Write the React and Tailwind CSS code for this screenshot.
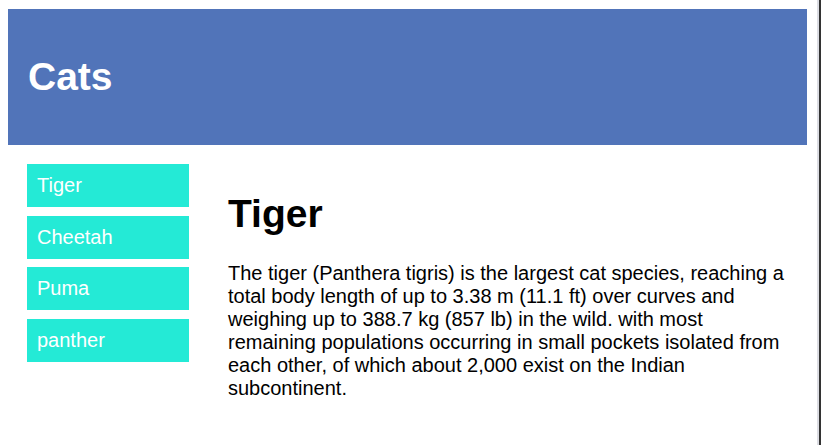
export default function App() {
  const cats = ["Tiger", "Cheetah", "Puma", "panther"];

  return (
    <div className="flex h-[445px] w-[821px] overflow-hidden bg-white font-['Liberation_Sans',Arial,sans-serif] leading-[normal]">
      <div className="flex-1 pt-[9px]">
        {/* header */}
        <header className="ml-[8px] mr-[10px] flex h-[136px] items-center bg-[#5174b9] pl-[20px]">
          <h1 className="text-[39px] font-bold text-white">Cats</h1>
        </header>

        <div className="flex pl-[27px] pt-[19px]">
          {/* side nav */}
          <nav className="flex w-[162px] shrink-0 flex-col gap-[8.5px]">
            {cats.map((cat) => (
              <a key={cat} className="block bg-[#24ead6] px-[10px] py-[10px] text-[20px] text-white">
                {cat}
              </a>
            ))}
          </nav>

          {/* article */}
          <main className="ml-[39px] w-[562px] pt-[28px]">
            <h2 className="text-[39px] font-bold text-black">Tiger</h2>
            <p className="mt-[26px] text-[20px] text-black">
              The tiger (Panthera tigris) is the largest cat species, reaching a total body length of up
              to 3.38 m (11.1 ft) over curves and weighing up to 388.7 kg (857 lb) in the wild. with
              most remaining populations occurring in small pockets isolated from each other, of which
              about 2,000 exist on the Indian subcontinent.
            </p>
          </main>
        </div>
      </div>
      <div className="w-[2px] bg-[#dcdde3]" />
      <div className="w-[2px] bg-[#333333]" />
    </div>
  );
}
